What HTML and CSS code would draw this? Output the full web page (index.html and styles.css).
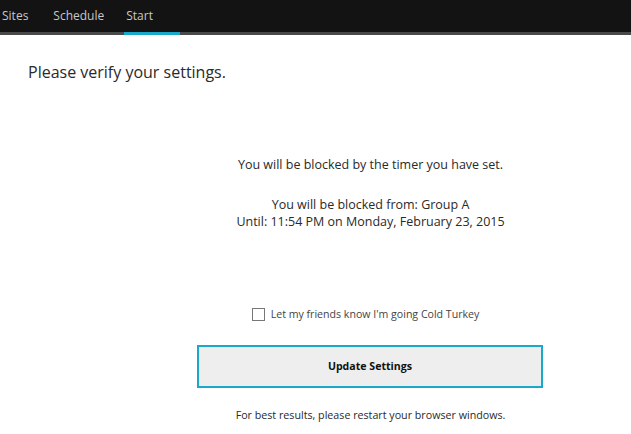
FILE: index.html
```html
<!DOCTYPE html>
<html lang="en">

<head>
  <meta charset="UTF-8">
  <title>Cold Turkey</title>
  <link rel="stylesheet" href="styles.css">
</head>

<body>
  <nav class="tabs">
    <a class="tab tab-sites">Sites</a>
    <a class="tab tab-schedule">Schedule</a>
    <a class="tab tab-start active">Start</a>
  </nav>

  <main>
    <h1>Please verify your settings.</h1>

    <section class="summary">
      <p class="timer-note">You will be blocked by the timer you have set.</p>
      <p class="block-info">You will be blocked from: Group A<br>Until: 11:54 PM on Monday, February 23, 2015</p>

      <label class="share">
        <input type="checkbox">
        <span class="box"></span>
        Let my friends know I'm going Cold Turkey
      </label>

      <button class="update">Update Settings</button>

      <p class="hint">For best results, please restart your browser windows.</p>
    </section>
  </main>
</body>

</html>
```

FILE: styles.css
```css
body {
  margin: 0;
  font-family: "Open Sans", "Noto Sans", sans-serif;
  background: #fff;
  color: #222;
}

.tabs {
  display: flex;
  align-items: flex-end;
  height: 32px;
  background: #131313;
  border-bottom: 3px solid #4a4a4a;
}

.tab {
  position: relative;
  font-size: 12px;
  color: #c8c8c8;
  line-height: 33px;
}

.tab-sites {
  padding-left: 2px;
}

.tab-schedule {
  margin-left: 25px;
}

.tab-start {
  margin-left: 20px;
  padding-left: 2px;
  width: 54px;
}

.tab.active::after {
  content: "";
  position: absolute;
  left: 0;
  right: 0;
  bottom: -3px;
  height: 3px;
  background: #1aa9cb;
}

main {
  padding: 0 0 0 28px;
}

h1 {
  margin: 27px 0 0;
  font-size: 16px;
  font-weight: 400;
  color: #2a2a2a;
  line-height: 21px;
}

.summary {
  margin-left: 82px;
  padding-top: 73px;
  text-align: center;
  font-size: 12.5px;
  color: #2a2a2a;
}

.summary p {
  margin: 0;
}

.timer-note {
  line-height: 17px;
}

.block-info {
  margin-top: 23px !important;
  line-height: 17px;
}

.share {
  display: inline-flex;
  align-items: center;
  gap: 6px;
  margin-top: 77px;
  margin-right: 10px;
  font-size: 10.6px;
  color: #444;
}

.share input {
  display: none;
}

.box {
  width: 11px;
  height: 11px;
  border: 1px solid #777;
  background: #fff;
}

.update {
  display: block;
  width: 346px;
  height: 43px;
  margin: 20px 0 0 87px;
  background: #eeeeee;
  border: 2px solid #1aa9cb;
  font-family: inherit;
  font-size: 10.6px;
  font-weight: 700;
  color: #111;
}

.hint {
  margin-top: 19px !important;
  font-size: 10.7px;
  line-height: 16px;
}
```
